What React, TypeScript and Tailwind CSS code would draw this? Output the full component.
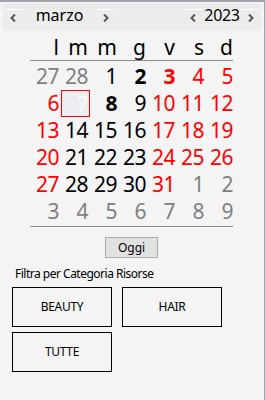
import React from "react";

type Day = { n: number; c: "g" | "k" | "r"; b?: boolean; sel?: boolean };

const WEEKDAYS = ["l", "m", "m", "g", "v", "s", "d"];

const WEEKS: Day[][] = [
  [
    { n: 27, c: "g" },
    { n: 28, c: "g" },
    { n: 1, c: "k" },
    { n: 2, c: "k", b: true },
    { n: 3, c: "r", b: true },
    { n: 4, c: "r" },
    { n: 5, c: "r" },
  ],
  [
    { n: 6, c: "r" },
    { n: 7, c: "k", sel: true },
    { n: 8, c: "k", b: true },
    { n: 9, c: "k" },
    { n: 10, c: "r" },
    { n: 11, c: "r" },
    { n: 12, c: "r" },
  ],
  [
    { n: 13, c: "r" },
    { n: 14, c: "k" },
    { n: 15, c: "k" },
    { n: 16, c: "k" },
    { n: 17, c: "r" },
    { n: 18, c: "r" },
    { n: 19, c: "r" },
  ],
  [
    { n: 20, c: "r" },
    { n: 21, c: "k" },
    { n: 22, c: "k" },
    { n: 23, c: "k" },
    { n: 24, c: "r" },
    { n: 25, c: "r" },
    { n: 26, c: "r" },
  ],
  [
    { n: 27, c: "r" },
    { n: 28, c: "k" },
    { n: 29, c: "k" },
    { n: 30, c: "k" },
    { n: 31, c: "r" },
    { n: 1, c: "g" },
    { n: 2, c: "g" },
  ],
  [
    { n: 3, c: "g" },
    { n: 4, c: "g" },
    { n: 5, c: "g" },
    { n: 6, c: "g" },
    { n: 7, c: "g" },
    { n: 8, c: "g" },
    { n: 9, c: "g" },
  ],
];

const COLOR = {
  g: "text-[#808080]",
  k: "text-black",
  r: "text-[#ff0000]",
};

function Chevron({ dir }: { dir: "left" | "right" }) {
  return (
    <svg width="7" height="8" viewBox="0 0 7 8" className="block">
      <path
        d={dir === "left" ? "M5 0.5 L1.5 4 L5 7.5" : "M2 0.5 L5.5 4 L2 7.5"}
        fill="none"
        stroke="#555555"
        strokeWidth="2"
      />
    </svg>
  );
}

function NavButton({ dir }: { dir: "left" | "right" }) {
  return (
    <div className="w-[17px] h-[19px] border-t border-white flex justify-center pt-[4px]">
      <Chevron dir={dir} />
    </div>
  );
}

function FilterButton({ label }: { label: string }) {
  return (
    <div className="w-[100px] h-[40px] border border-black flex items-center justify-center text-[12px] tracking-[-0.3px] text-black">
      {label}
    </div>
  );
}

export default function App() {
  return (
    <div
      className="w-[265px] h-[400px] bg-[#f4f4f4] border-t-2 border-r border-[#a4a4ae] overflow-hidden"
      style={{ fontFamily: '"Noto Sans", "Open Sans", sans-serif' }}
    >
      {/* header */}
      <div className="mx-[3px] mt-px h-[27px] bg-[#ececec] flex items-start pt-[6px] px-[2px]">
        <NavButton dir="left" />
        <div className="w-[75px] text-center text-[16px] leading-[19px] -mt-[3px] text-black">
          marzo
        </div>
        <NavButton dir="right" />
        <div className="flex-1" />
        <NavButton dir="left" />
        <div className="w-[40px] text-center text-[16px] leading-[19px] -mt-[3px] tracking-[-0.3px] text-black">
          2023
        </div>
        <NavButton dir="right" />
      </div>

      {/* weekdays */}
      <div className="ml-[32px] w-[203px] h-[30px] grid grid-cols-7 items-end pb-[2px]">
        {WEEKDAYS.map((d, i) => (
          <div key={i} className="text-right pr-[2px] text-[21px] leading-[21px] text-black">
            {d}
          </div>
        ))}
      </div>
      <div className="ml-[30px] w-[203px] h-px bg-[#8a8a8a]" />

      {/* days */}
      <div className="ml-[32px] w-[203px] mt-[2px]">
        {WEEKS.map((w, wi) => (
          <div key={wi} className="grid grid-cols-7">
            {w.map((d, di) => (
              <div
                key={di}
                className={`h-[27px] text-right pr-[2px] text-[21px] tracking-[-0.5px] leading-[27px] ${
                  d.b ? "font-bold" : ""
                } ${
                  d.sel
                    ? "border border-[#ff0000] bg-[#eceef2] text-[#fafafa] leading-[25px] pr-px"
                    : COLOR[d.c]
                }`}
              >
                {d.n}
              </div>
            ))}
          </div>
        ))}
      </div>
      <div className="ml-[30px] w-[203px] h-px bg-[#8a8a8a] mt-px" />

      {/* oggi */}
      <div className="mt-[10px] ml-[105px] w-[53px] h-[21px] border border-[#adadad] bg-[#e1e1e1] flex items-center justify-center text-[12px] text-black">
        Oggi
      </div>

      <div className="mt-[8px] ml-[15px] text-[12px] leading-[16px] tracking-[-0.5px] text-black">
        Filtra per Categoria Risorse
      </div>

      <div className="mt-[5px] ml-[12px] flex flex-wrap gap-x-[10px] gap-y-[5px] w-[210px]">
        <FilterButton label="BEAUTY" />
        <FilterButton label="HAIR" />
        <FilterButton label="TUTTE" />
      </div>
    </div>
  );
}
